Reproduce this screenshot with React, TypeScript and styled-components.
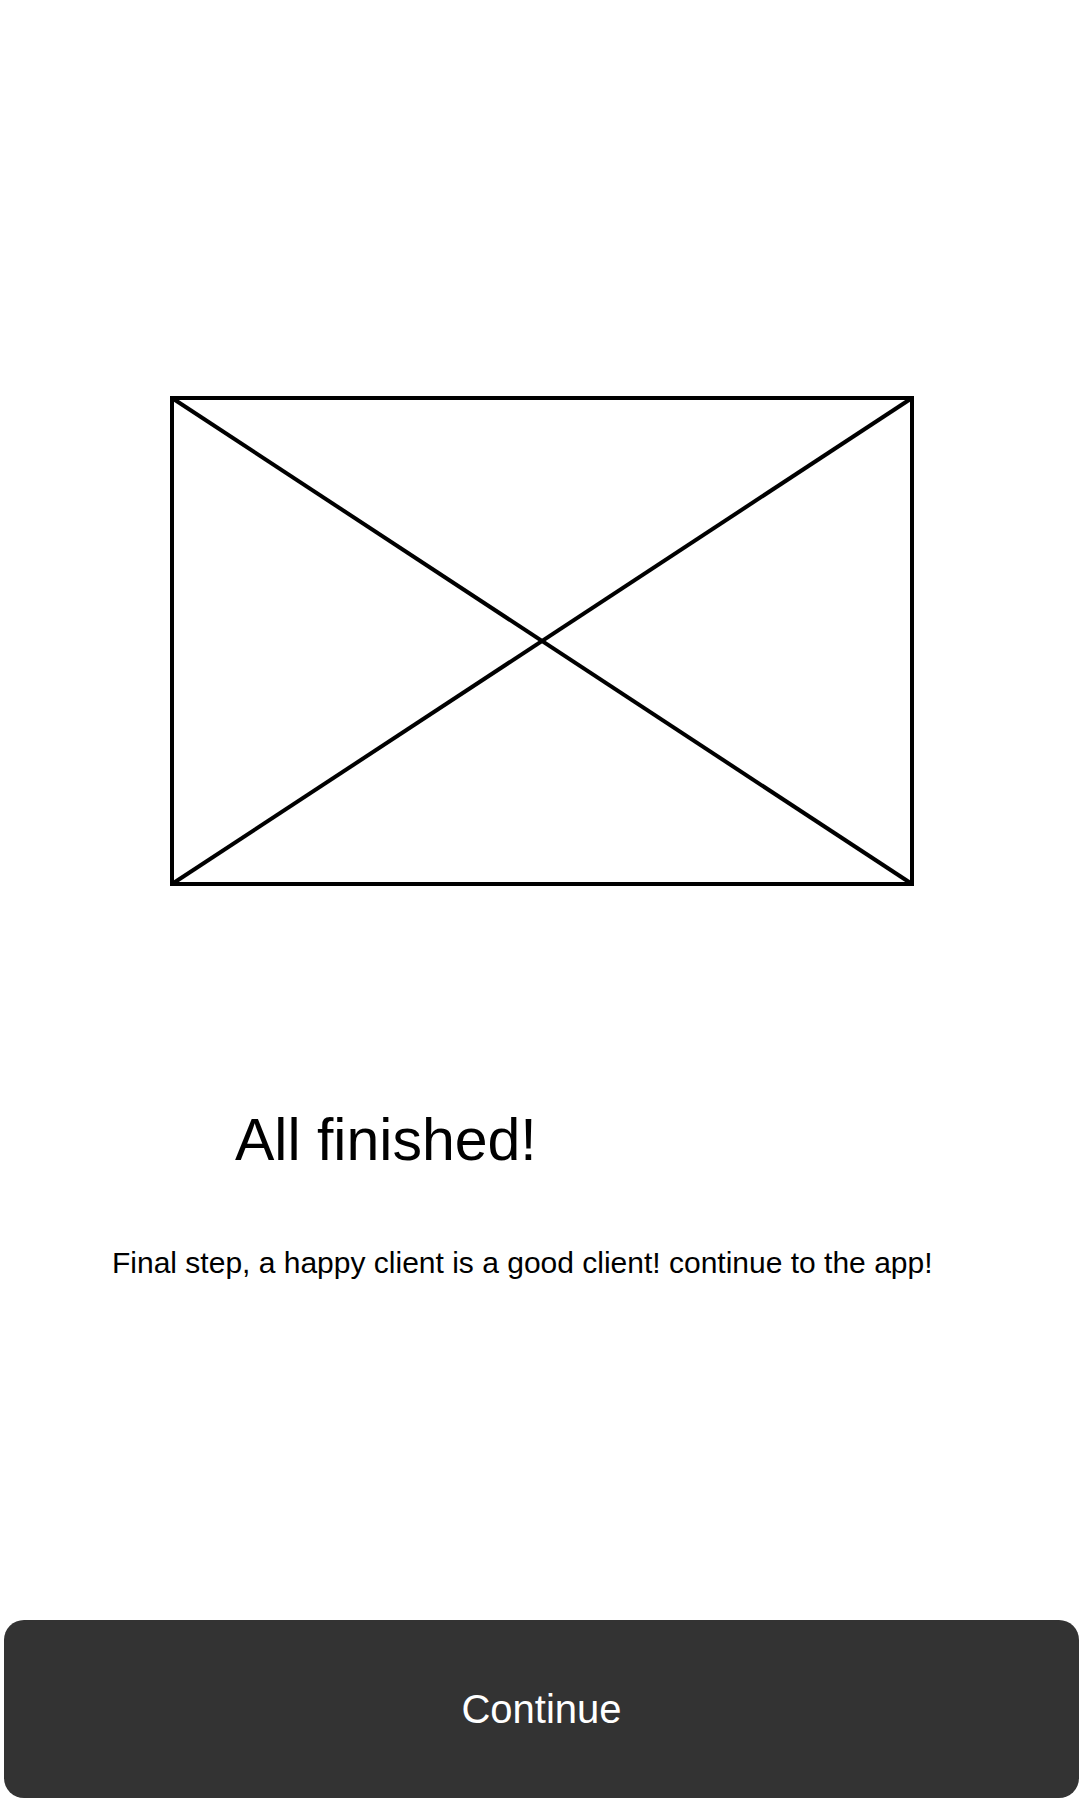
import React from 'react';
import styled, { createGlobalStyle } from 'styled-components';

const GlobalStyle = createGlobalStyle`
  html, body {
    margin: 0;
    padding: 0;
    background: #ffffff;
  }
  body {
    font-family: 'Liberation Sans', Arial, sans-serif;
    color: #000000;
  }
`;

// 이미지 자리 표시용 박스 (X 표시)
const Placeholder = () => (
  <S.Picture width="744" height="490" viewBox="0 0 744 490">
    <rect x="2" y="2" width="740" height="486" fill="none" stroke="#000" strokeWidth="4" />
    <line x1="2" y1="2" x2="742" y2="488" stroke="#000" strokeWidth="4" />
    <line x1="742" y1="2" x2="2" y2="488" stroke="#000" strokeWidth="4" />
  </S.Picture>
);

const App = () => {
  return (
    <>
      <GlobalStyle />
      <S.Page>
        <S.Top>
          <Placeholder />
          <S.Title>All finished!</S.Title>
          <S.Description>Final step, a happy client is a good client! continue to the app!</S.Description>
        </S.Top>
        <S.ContinueButton type="button">Continue</S.ContinueButton>
      </S.Page>
    </>
  );
};

export default App;

const S = {
  Page: styled.div`
    display: flex;
    flex-direction: column;
    width: 1080px;
    min-height: 1800px;
    box-sizing: border-box;
    padding: 396px 1px 2px 4px;
  `,
  Top: styled.div`
    display: flex;
    flex-direction: column;
    flex: 1;
  `,
  Picture: styled.svg`
    display: block;
    margin-left: 166px;
  `,
  Title: styled.h1`
    margin: 220px 0 0 231px;
    font-size: 59px;
    line-height: 68px;
    font-weight: normal;
  `,
  Description: styled.p`
    margin: 72px 0 0 108px;
    font-size: 30px;
    line-height: 34px;
  `,
  ContinueButton: styled.button`
    display: flex;
    align-items: center;
    justify-content: center;
    width: 1075px;
    height: 178px;
    border: none;
    border-radius: 20px;
    background-color: #333333;
    color: #ffffff;
    font-family: 'Liberation Sans', Arial, sans-serif;
    font-size: 40px;
    cursor: pointer;
  `
};
